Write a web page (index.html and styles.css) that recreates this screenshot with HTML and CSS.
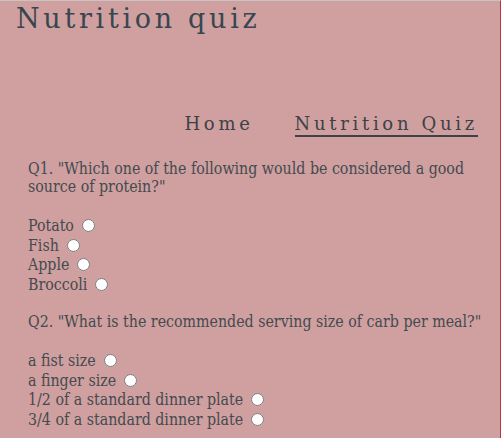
FILE: index.html
```html
<!DOCTYPE html>
<html>
<head>
<meta charset="utf-8">
<link rel="stylesheet" href="styles.css">
</head>
<body>
<header class="top">
  <h1 class="title">Nutrition quiz</h1>
  <nav class="nav">
    <a class="nav-link" href="#">Home</a>
    <a class="nav-link active" href="#">Nutrition Quiz</a>
  </nav>
</header>
<main class="quiz">
  <p class="question">Q1. "Which one of the following would be considered a good source of protein?"</p>
  <div class="options">
    <label class="option">Potato <input type="radio" name="q1"></label>
    <label class="option">Fish <input type="radio" name="q1"></label>
    <label class="option">Apple <input type="radio" name="q1"></label>
    <label class="option">Broccoli <input type="radio" name="q1"></label>
  </div>
  <p class="question">Q2. "What is the recommended serving size of carb per meal?"</p>
  <div class="options">
    <label class="option">a fist size <input type="radio" name="q2"></label>
    <label class="option">a finger size <input type="radio" name="q2"></label>
    <label class="option">1/2 of a standard dinner plate <input type="radio" name="q2"></label>
    <label class="option">3/4 of a standard dinner plate <input type="radio" name="q2"></label>
  </div>
</main>
</body>
</html>
```
FILE: styles.css
```css
html, body {
  margin: 0;
  padding: 0;
}
body {
  background: #cfa09f;
  border-top: 1px solid #c8c4c4;
  border-right: 1px solid #c0303a;
  min-height: 437px;
  box-sizing: border-box;
  color: #444a50;
  font-family: "DejaVu Serif Condensed", "DejaVu Serif", serif;
  font-stretch: condensed;
}
.top {
  display: flex;
  flex-direction: column;
}
.title {
  margin: 0;
  padding: 1px 0 0 16px;
  font-family: "DejaVu Serif", serif;
  font-stretch: normal;
  font-weight: normal;
  font-size: 27px;
  letter-spacing: 3.7px;
  color: #37464f;
  line-height: 34px;
}
.nav {
  display: flex;
  justify-content: flex-end;
  gap: 41px;
  padding: 77px 25px 0 0;
}
.nav-link {
  font-family: "DejaVu Serif", serif;
  font-stretch: normal;
  font-size: 18px;
  letter-spacing: 3.7px;
  color: #3c4248;
  text-decoration: none;
  line-height: 22px;
}
.nav-link.active {
  border-bottom: 2px solid #3c4248;
  margin-right: -3px;
}
.quiz {
  padding: 23px 0 0 28px;
}
.question {
  margin: 0 0 20px;
  font-size: 15.8px;
  line-height: 18px;
  padding-right: 0;
}
.options {
  display: flex;
  flex-direction: column;
  margin-bottom: 19px;
}
.option {
  font-size: 15.8px;
  line-height: 19.5px;
  display: flex;
  align-items: center;
  gap: 0;
}
.option input {
  margin: 0 0 0 8px;
  width: 13px;
  height: 13px;
}
```
